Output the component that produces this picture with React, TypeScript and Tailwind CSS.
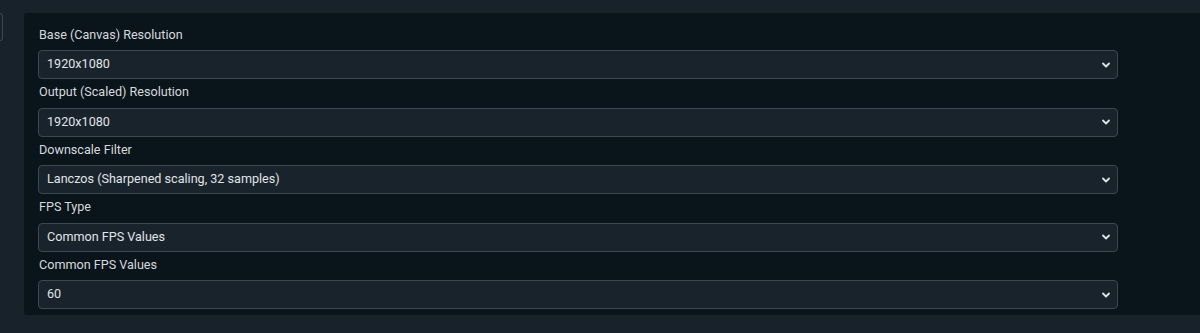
import React from "react";

const fields = [
  { label: "Base (Canvas) Resolution", value: "1920x1080" },
  { label: "Output (Scaled) Resolution", value: "1920x1080" },
  { label: "Downscale Filter", value: "Lanczos (Sharpened scaling, 32 samples)" },
  { label: "FPS Type", value: "Common FPS Values" },
  { label: "Common FPS Values", value: "60" },
];

function Chevron() {
  return (
    <svg width="10" height="10" viewBox="0 0 10 10" className="text-[#dfe3e6]">
      <path d="M2 3.5 L5 6.5 L8 3.5" fill="none" stroke="currentColor" strokeWidth="1.8" strokeLinecap="round" strokeLinejoin="round" />
    </svg>
  );
}

export default function App() {
  return (
    <div
      className="w-[1200px] h-[333px] bg-[#18222b] overflow-hidden flex items-start pt-[13px]"
      style={{ fontFamily: "Roboto, 'Liberation Sans', sans-serif" }}
    >
      <div className="w-[3px] h-[28px] border-r border-b border-t border-[#3a4651] rounded-r-[3px] shrink-0" />
      <div className="ml-[21px] flex-1 h-[302px] bg-[#0a141b] rounded-tl-[3px] rounded-bl-[3px] pl-[14px] pt-[10px]">
        <div className="flex flex-col w-[1080px]">
          {fields.map((f) => (
            <div key={f.label} className="flex flex-col">
              <div className="h-[24px] flex items-center pl-[1px] text-[12.6px] text-[#d6dadd]">{f.label}</div>
              <div className="mt-[3px] h-[29px] mb-[1.5px] bg-[#18232c] border border-[#3b4752] rounded-[4px] flex items-center justify-between pl-[8px] pr-[6px] text-[12.6px] text-[#e0e4e7]">
                <span>{f.value}</span>
                <Chevron />
              </div>
            </div>
          ))}
        </div>
      </div>
    </div>
  );
}
